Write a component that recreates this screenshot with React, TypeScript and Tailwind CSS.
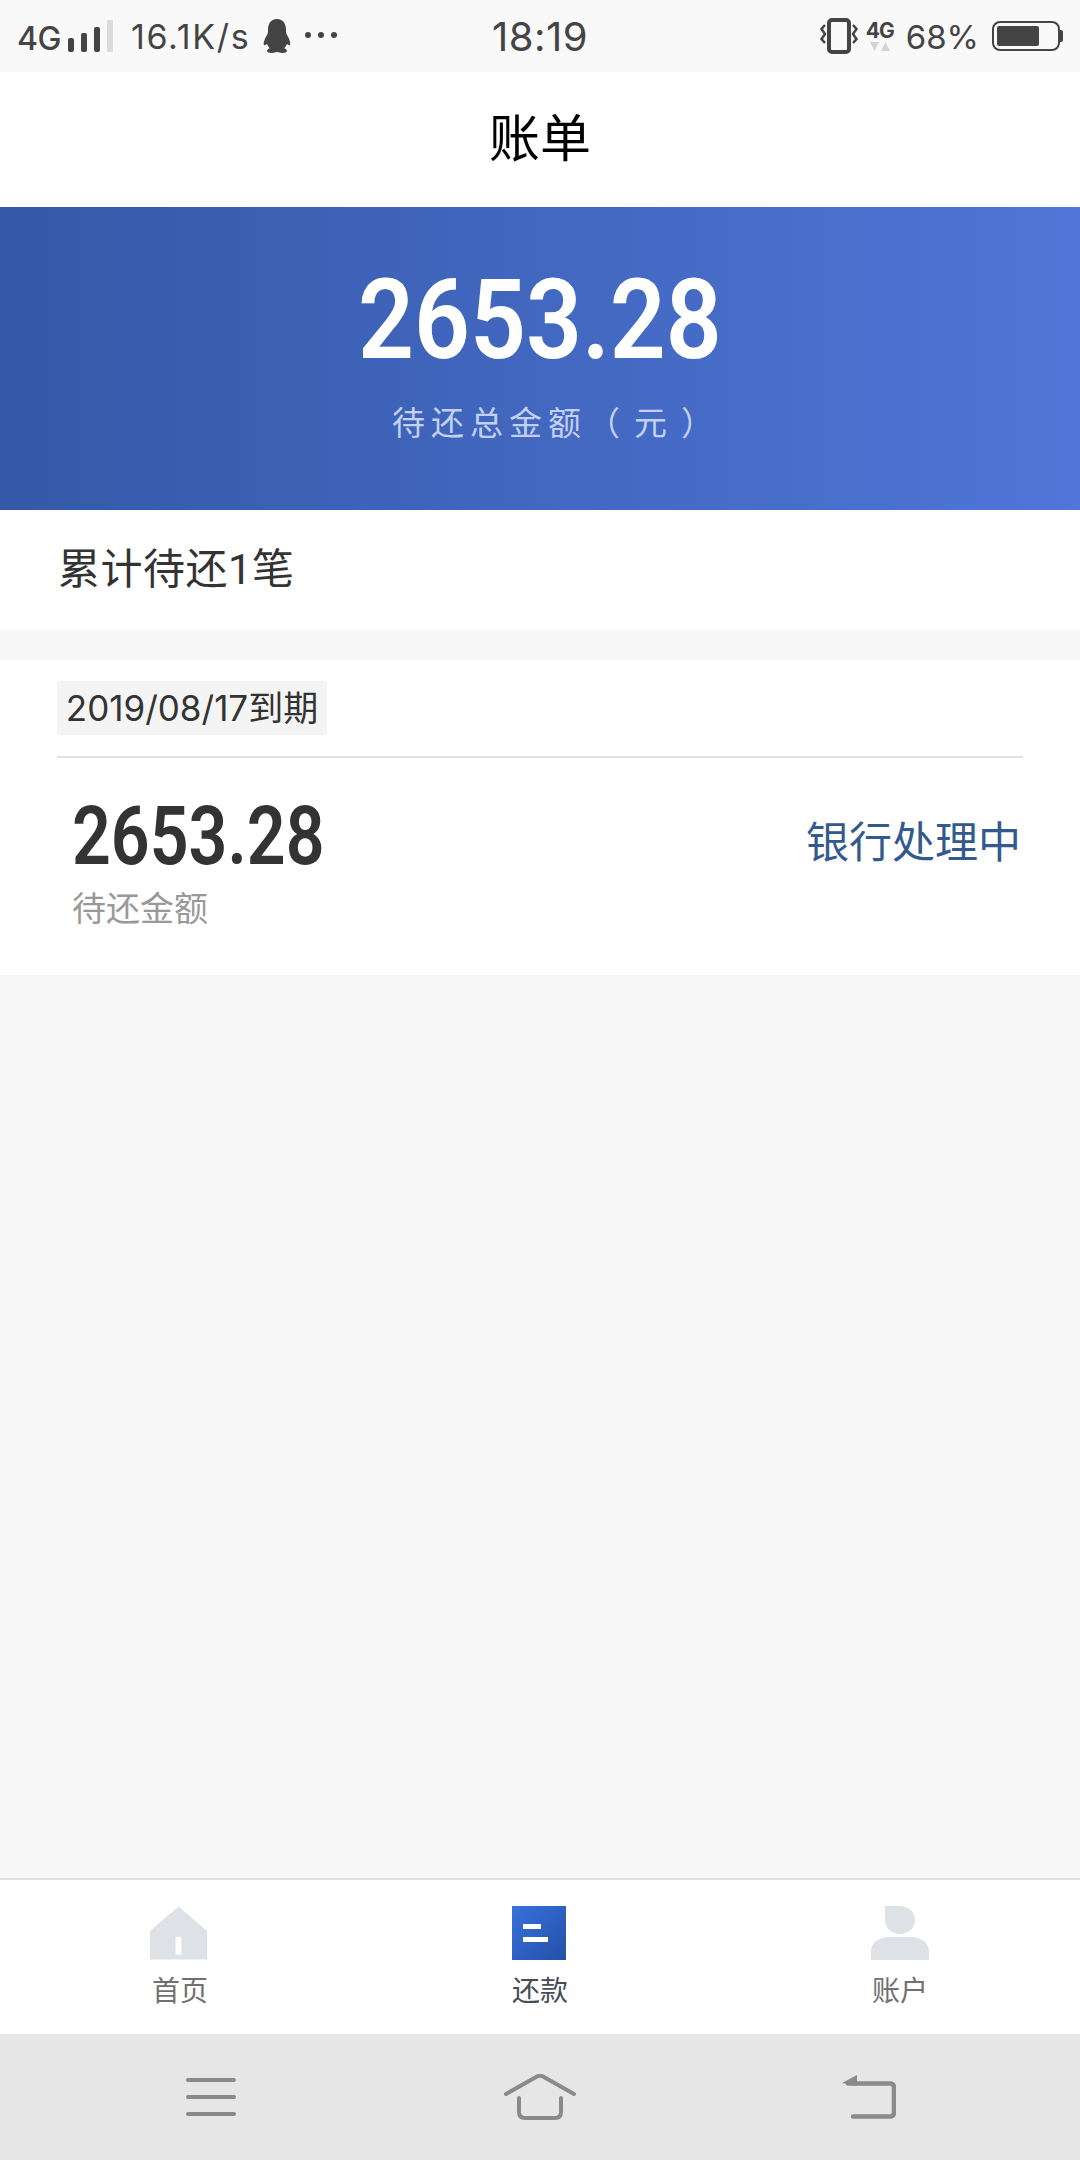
import { FC } from 'react';

const cjk = "font-['Roboto','Noto_Sans_CJK_SC',sans-serif]";
const statusFont = "font-['Inter','Noto_Sans_CJK_SC',sans-serif]";

const StatusBar: FC = () => (
  <div className={`flex h-[72px] items-center justify-between bg-[#f9f9f9] text-[#444444] ${statusFont}`}>
    <div className="flex w-[360px] items-center pl-[17px]">
      <span className="mt-[5px] text-[32px] leading-none font-medium tracking-[-0.5px]">4G</span>
      <div className="ml-[7px] flex h-[32px] items-end gap-[7px]">
        <div className="h-[14px] w-[6px] rounded-[2px] bg-[#444444]" />
        <div className="h-[19px] w-[6px] rounded-[2px] bg-[#444444]" />
        <div className="h-[25px] w-[6px] rounded-[2px] bg-[#444444]" />
        <div className="h-[32px] w-[6px] bg-[#dddddd]" />
      </div>
      <span className="mt-[2px] ml-[18px] text-[34px] leading-none tracking-[1.7px]">16.1K/s</span>
      <svg className="ml-[13px]" width="28" height="34" viewBox="0 0 28 34" fill="#444444">
        <path d="M14 0C7.500 0 5 5 5 11c0 2 0 3-1 5-2 3-4 8-3 10 1 1 2-1 3-1 1 2 2 4 3 4-2 1-3 2-3 3 0 1 2 2 5 2 2 0 3-1 5-1s3 1 5 1c3 0 5-1 5-2 0-1-1-2-3-3 1 0 2-2 3-4 1 0 2 2 3 1 1-2-1-7-3-10-1-2-1-3-1-5C23 5 20.500 0 14 0z" />
      </svg>
      <div className="mb-[2px] ml-[14px] flex gap-[7px]">
        <div className="size-[6px] rounded-full bg-[#444444]" />
        <div className="size-[6px] rounded-full bg-[#444444]" />
        <div className="size-[6px] rounded-full bg-[#444444]" />
      </div>
    </div>
    <span className="mt-[2px] text-[40px] leading-none tracking-[0.5px]">18:19</span>
    <div className="flex w-[360px] items-center justify-end pr-[17px]">
      <svg width="38" height="36" viewBox="0 0 38 36" fill="none" stroke="#444444">
        <rect x="9" y="2" width="20" height="32" rx="3" strokeWidth="4" />
        <path d="M5 7L1.500 11 5 16l-3.500 5 3.500 4M33 7l3.500 4L33 16l3.500 5-3.500 4" strokeWidth="2.500" />
      </svg>
      <div className="ml-[7px] flex w-[30px] flex-col items-center">
        <span className="text-[21px] leading-[22px] font-bold tracking-[-1px]">4G</span>
        <svg width="22" height="10" viewBox="0 0 22 10" fill="#d4d4d4">
          <path d="M1 0h9l-4.500 9zM12 9h9l-4.500-9z" />
        </svg>
      </div>
      <span className="mt-[2px] ml-[11px] text-[33px] leading-none">68%</span>
      <div className="ml-[13px] flex items-center">
        <div className="flex h-[30px] w-[68px] items-center rounded-[8px] border-2 border-[#444444] p-[3px]">
          <div className="h-[20px] w-[42px] rounded-[2px] bg-[#444444]" />
        </div>
        <div className="h-[12px] w-[3px] rounded-r-[2px] bg-[#444444]" />
      </div>
    </div>
  </div>
);

const Header: FC = () => (
  <div className="flex h-[135px] items-center justify-center bg-white text-[51px] leading-none text-black">账单</div>
);

const Banner: FC = () => (
  <div className="flex h-[303px] flex-col items-center bg-gradient-to-r from-[#3459a8] to-[#4f76d8]">
    <div className="mt-[53px] h-[120px] origin-center scale-x-[0.875] text-[112px] leading-[120px] font-semibold text-white">2653.28</div>
    <div className="mt-[24px] pl-[32px] text-[33px] leading-[40px] tracking-[6px] text-[#c3d0f0]">
      待还总金额（<span className="mx-[8px]">元</span>）
    </div>
  </div>
);

const Summary: FC = () => (
  <div className="flex h-[120px] items-center bg-white pl-[58px] text-[42px] leading-none tracking-[0.5px] text-[#333333]">累计待还1笔</div>
);

const BillCard: FC = () => (
  <div className="mt-[30px] h-[315px] bg-white px-[57px]">
    <div className="flex h-[98px] items-start border-b-2 border-[#e2e2e2] pt-[21px]">
      <div className={`flex h-[54px] w-[270px] items-center justify-center rounded-[4px] bg-[#f4f4f4] text-[35px] leading-none text-[#333333] ${statusFont}`}>
        2019/08/17到期
      </div>
    </div>
    <div className="flex items-start justify-between">
      <div className="pl-[15px]">
        <div className="mt-[39px] h-[80px] w-[250px]">
          <div className="origin-left scale-x-[0.84] text-[81px] leading-[80px] font-semibold whitespace-nowrap text-[#333333]">2653.28</div>
        </div>
        <div className="mt-[12px] text-[34px] leading-[40px] text-[#999999]">待还金额</div>
      </div>
      <div className="mt-[60px] pr-[2px] text-[43px] leading-[50px] text-[#33598f]">银行处理中</div>
    </div>
  </div>
);

const TabItem: FC<{ label: string; active?: boolean; children: React.ReactNode }> = ({ label, active, children }) => (
  <div className="flex flex-1 flex-col items-center pt-[26px]">
    {children}
    <span className={`mt-[14px] text-[28px] leading-[36px] ${active ? 'text-[#444c57]' : 'text-[#707070]'}`}>{label}</span>
  </div>
);

const TabBar: FC = () => (
  <div className="flex h-[156px] border-t-2 border-[#e0e0e0] bg-white">
    <TabItem label="首页">
      <svg className="mr-[3px]" width="57" height="54" viewBox="0 0 58 54">
        <path d="M29 0L58 25V54H0V25z" fill="#dee1e6" />
        <rect x="26" y="31" width="6" height="18" fill="white" />
      </svg>
    </TabItem>
    <TabItem label="还款" active>
      <div className="mr-[2px] flex h-[54px] w-[54px] flex-col gap-[8px] bg-gradient-to-br from-[#3872dc] to-[#2350a8] pt-[18px] pl-[11px]">
        <div className="h-[5px] w-[18px] bg-white" />
        <div className="h-[5px] w-[25px] bg-white" />
      </div>
    </TabItem>
    <TabItem label="账户">
      <svg width="58" height="54" viewBox="0 0 58 54" fill="#dee1e6">
        <path d="M14 0h15a15 14 0 1 1-15 14z" />
        <path d="M0 54V46C0 35 10 31 19 31h20c9 0 19 4 19 15v8z" />
      </svg>
    </TabItem>
  </div>
);

const NavBar: FC = () => (
  <div className="flex h-[126px] items-center bg-[#e6e6e6]">
    <div className="flex flex-1 justify-center">
      <svg className="ml-[62px]" width="50" height="38" viewBox="0 0 50 38" stroke="#8a8a8a" strokeWidth="4" strokeLinecap="round">
        <path d="M2 2h46M2 19h46M2 36h46" />
      </svg>
    </div>
    <div className="flex flex-1 justify-center">
      <svg width="72" height="46" viewBox="0 0 72 46" fill="none" stroke="#8a8a8a" strokeWidth="4" strokeLinecap="round" strokeLinejoin="round">
        <path d="M2 20L33 2.500q3-1.500 6 0L70 20" />
        <path d="M15 24v14q0 6 6 6h30q6 0 6-6V24" />
      </svg>
    </div>
    <div className="flex flex-1 justify-center">
      <svg className="mr-[62px]" width="54" height="44" viewBox="0 0 54 44" fill="none" stroke="#8a8a8a" strokeWidth="4.500" strokeLinecap="round">
        <path d="M6 8.500h42q4 0 4 4v25q0 4-4 4H11" />
        <path d="M0 8l15-8v11z" fill="#8a8a8a" strokeWidth="0" />
      </svg>
    </div>
  </div>
);

export default function App() {
  return (
    <div className={`flex h-[2160px] w-[1080px] flex-col overflow-hidden bg-[#f7f7f8] ${cjk}`}>
      <StatusBar />
      <Header />
      <Banner />
      <Summary />
      <BillCard />
      <div className="flex-1" />
      <TabBar />
      <NavBar />
    </div>
  );
}
